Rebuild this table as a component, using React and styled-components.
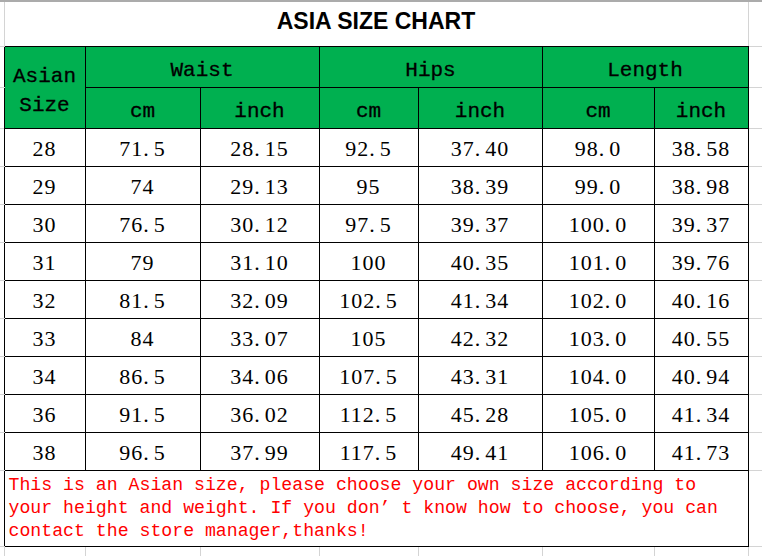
import React from "react"
import styled, { createGlobalStyle } from "styled-components"

const GlobalStyle = createGlobalStyle`
  html, body {
    margin: 0;
    padding: 0;
    background: #fff;
  }
  body {
    font-family: "Liberation Mono", monospace;
  }
`

const GRID = "#d4d4d4"
const GREEN = "#00b050"

const Sheet = styled.div`
  width: 762px;
  height: 556px;
  overflow: hidden;
  border-top: 2px solid #ababab;
  box-sizing: border-box;
`

const Chart = styled.table`
  width: 762px;
  table-layout: fixed;
  border-collapse: collapse;
`

const Row = styled.tr`
  height: ${p => p.h}px;
`

const Gutter = styled.td`
  padding: 0;
  border: none;
  border-bottom: 1px solid ${GRID};
`

const Title = styled.td`
  padding: 0 0 5px;
  border-left: 1px solid ${GRID};
  border-right: 1px solid ${GRID};
  border-bottom: 1px solid #000;
  text-align: center;
  vertical-align: middle;
  font-family: "Liberation Sans", Arial, sans-serif;
  font-weight: bold;
  font-size: 23px;
  color: #000;
`

const Head = styled.th`
  padding: ${p => (p.stack ? "7px 0 0" : "8px 0 0")};
  border: 1px solid #000;
  background: ${GREEN};
  font-family: "Liberation Mono", monospace;
  font-weight: normal;
  font-size: 21px;
  line-height: ${p => (p.stack ? "29px" : "24px")};
  color: #000;
  text-align: center;
  vertical-align: middle;
  -webkit-text-stroke: 0.3px #000;
`

const Cell = styled.td`
  padding: 3px 0 0;
  border: 1px solid #000;
  font-family: "Liberation Serif", "Times New Roman", serif;
  font-size: 22px;
  letter-spacing: 1px;
  color: #000;
  text-align: center;
  vertical-align: middle;
`

const Dot = styled.span`
  margin-right: 4px;
`

const Note = styled.td`
  padding: 3px 0 0 4px;
  border: 1px solid #000;
  vertical-align: top;
  font-family: "Liberation Mono", monospace;
  font-size: 18.2px;
  line-height: 23px;
  color: #ff0000;
  white-space: nowrap;
`

const NoteLine = styled.div``

const Blank = styled.td`
  padding: 0;
  border-left: 1px solid ${GRID};
  border-right: 1px solid ${GRID};
  border-bottom: 1px solid ${GRID};
`

const widths = [4, 81, 115, 119, 99, 124, 112, 94, 14]

const rows = [
  ["28", "71.5", "28.15", "92.5", "37.40", "98.0", "38.58"],
  ["29", "74", "29.13", "95", "38.39", "99.0", "38.98"],
  ["30", "76.5", "30.12", "97.5", "39.37", "100.0", "39.37"],
  ["31", "79", "31.10", "100", "40.35", "101.0", "39.76"],
  ["32", "81.5", "32.09", "102.5", "41.34", "102.0", "40.16"],
  ["33", "84", "33.07", "105", "42.32", "103.0", "40.55"],
  ["34", "86.5", "34.06", "107.5", "43.31", "104.0", "40.94"],
  ["36", "91.5", "36.02", "112.5", "45.28", "105.0", "41.34"],
  ["38", "96.5", "37.99", "117.5", "49.41", "106.0", "41.73"],
]

const Num = ({ value }) => {
  const [whole, frac] = value.split(".")
  if (frac === undefined) return whole
  return <>{whole}<Dot>.</Dot>{frac}</>
}

export default function App() {
  return (
    <Sheet>
      <GlobalStyle />
      <Chart>
        <colgroup>
          {widths.map((w, i) => <col key={i} style={{ width: w }} />)}
        </colgroup>
        <tbody>
          <Row h={44}>
            <Gutter />
            <Title colSpan={7}>ASIA SIZE CHART</Title>
            <Gutter />
          </Row>
          <Row h={41}>
            <Gutter />
            <Head rowSpan={2} stack>Asian<br />Size</Head>
            <Head colSpan={2}>Waist</Head>
            <Head colSpan={2}>Hips</Head>
            <Head colSpan={2}>Length</Head>
            <Gutter />
          </Row>
          <Row h={41}>
            <Gutter />
            <Head>cm</Head>
            <Head>inch</Head>
            <Head>cm</Head>
            <Head>inch</Head>
            <Head>cm</Head>
            <Head>inch</Head>
            <Gutter />
          </Row>
          {rows.map(r => (
            <Row h={38} key={r[0]}>
              <Gutter />
              {r.map((v, i) => <Cell key={i}><Num value={v} /></Cell>)}
              <Gutter />
            </Row>
          ))}
          <Row h={76}>
            <Gutter />
            <Note colSpan={7}>
              <NoteLine>This is an Asian size, please choose your own size according to</NoteLine>
              <NoteLine>your height and weight. If you don’ t know how to choose, you can</NoteLine>
              <NoteLine>contact the store manager,thanks!</NoteLine>
            </Note>
            <Gutter />
          </Row>
          <Row h={30}>
            <Gutter />
            {widths.slice(1, 8).map((_, i) => <Blank key={i} />)}
            <Gutter />
          </Row>
        </tbody>
      </Chart>
    </Sheet>
  )
}
